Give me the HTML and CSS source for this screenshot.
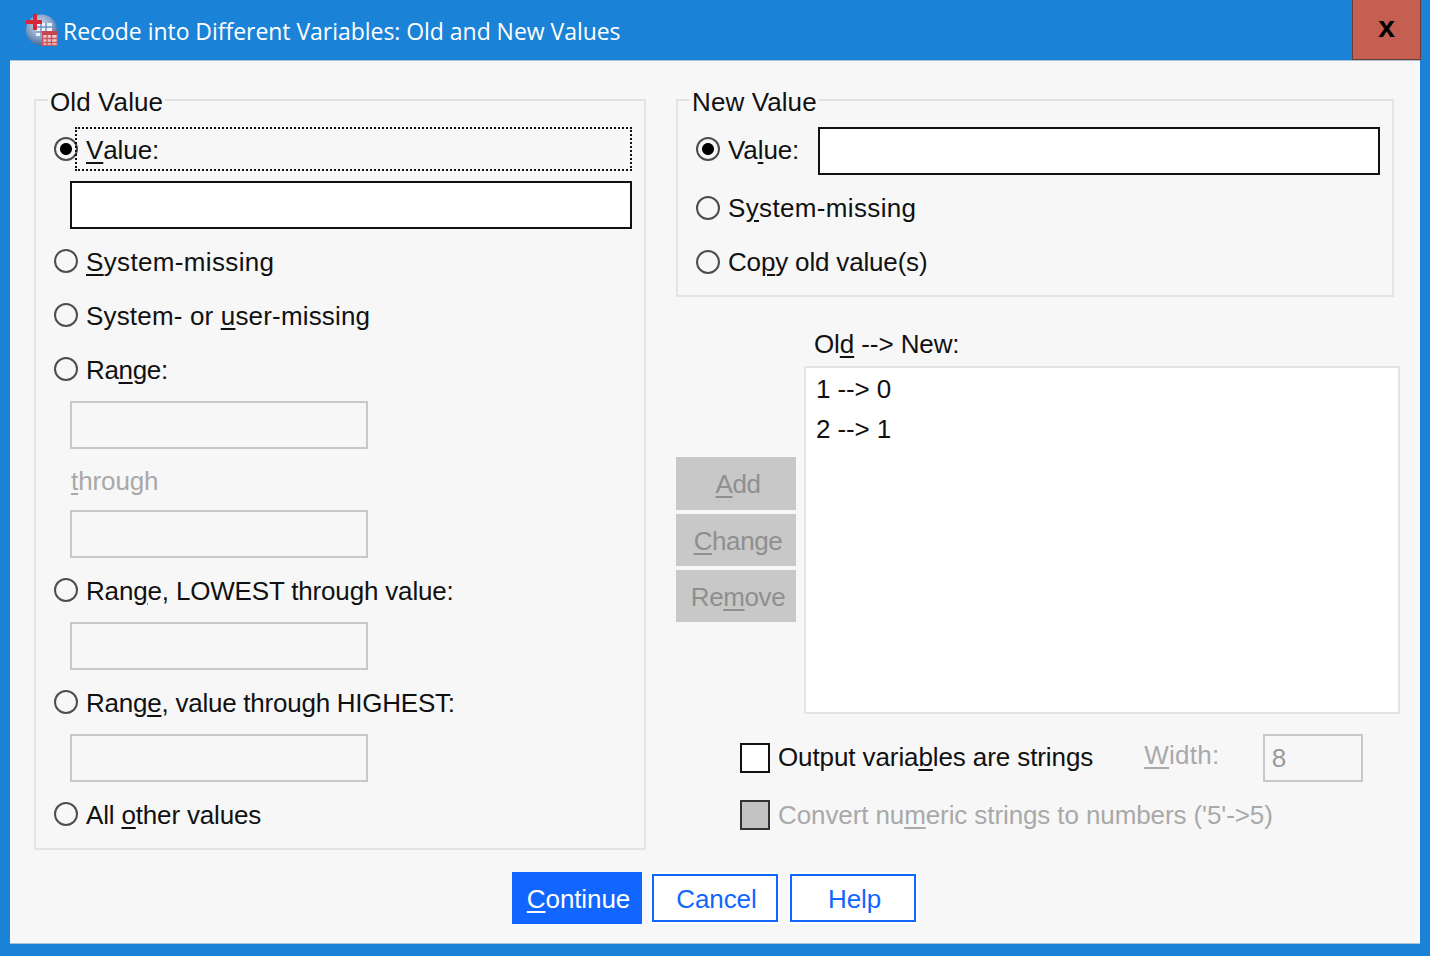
FILE: index.html
```html
<!DOCTYPE html>
<html lang="en">
<head>
    <meta charset="UTF-8">
    <title>Recode into Different Variables: Old and New Values</title>
    <link rel="stylesheet" href="styles.css">
</head>
<body>
    <div class="titlebar">
        <svg class="app-icon" width="32" height="32" viewBox="0 0 32 32">
            <defs>
                <radialGradient id="globe" cx="0.45" cy="0.35" r="0.7">
                    <stop offset="0" stop-color="#d5e0ee"/>
                    <stop offset="0.6" stop-color="#7f9cc4"/>
                    <stop offset="1" stop-color="#3f5f92"/>
                </radialGradient>
            </defs>
            <circle cx="15.5" cy="16" r="15.5" fill="url(#globe)"/>
            <rect x="10" y="9" width="16" height="13" fill="#eef3fa"/>
            <path d="M10 13h16M10 18h16M15 9v13M20 9v13" stroke="#6f92c4" stroke-width="1.5"/>
            <path d="M9 0v16M0 8h16" stroke="#d9253a" stroke-width="4"/>
            <rect x="16" y="17" width="16" height="15" fill="#f3c9cc"/>
            <rect x="16" y="17" width="16" height="4" fill="#c8454f"/>
            <path d="M16.7 21v11M21 21v11M25.500 21v11M31.300 21v11M16 24.500h16M16 28.500h16M16 31.500h16" stroke="#c8555f" stroke-width="1.400"/>
        </svg>
        <span class="title">Recode into Different Variables: Old and New Values</span>
        <div class="close">x</div>
    </div>

    <div class="dialog">
        <div class="main">
            <div class="group group-old">
                <div class="legend">Old Value</div>
                <div class="opt">
                    <input type="radio" name="old" checked>
                    <label class="focus"><u>V</u>alue:</label>
                </div>
                <input class="field indent" type="text">
                <div class="opt"><input type="radio" name="old"><label class="wide"><u>S</u>ystem-missing</label></div>
                <div class="opt"><input type="radio" name="old"><label class="mid">System- or <u>u</u>ser-missing</label></div>
                <div class="opt"><input type="radio" name="old"><label class="tight">Ra<u>n</u>ge:</label></div>
                <input class="field indent short" type="text" disabled>
                <div class="through"><u>t</u>hrough</div>
                <input class="field indent short" type="text" disabled>
                <div class="opt"><input type="radio" name="old"><label class="narrow">Ran<u>g</u>e, LOWEST through value:</label></div>
                <input class="field indent short" type="text" disabled>
                <div class="opt"><input type="radio" name="old"><label class="narrower">Rang<u>e</u>, value through HIGHEST:</label></div>
                <input class="field indent short" type="text" disabled>
                <div class="opt"><input type="radio" name="old"><label class="narrow">All <u>o</u>ther values</label></div>
            </div>

            <div class="right">
                <div class="group group-new">
                    <div class="legend">New Value</div>
                    <div class="opt opt-value">
                        <input type="radio" name="new" checked>
                        <label>Va<u>l</u>ue:</label>
                        <input class="field" type="text">
                    </div>
                    <div class="opt"><input type="radio" name="new"><label class="wide">S<u>y</u>stem-missing</label></div>
                    <div class="opt"><input type="radio" name="new"><label class="narrow">Co<u>p</u>y old value(s)</label></div>
                </div>

                <div class="list-label">Ol<u>d</u> --&gt; New:</div>
                <div class="list-row">
                    <div class="list-buttons">
                        <button class="btn-off" disabled><u>A</u>dd</button>
                        <button class="btn-off" disabled><u>C</u>hange</button>
                        <button class="btn-off" disabled>Re<u>m</u>ove</button>
                    </div>
                    <div class="listbox">
                        <div class="list-item">1 --&gt; 0</div>
                        <div class="list-item">2 --&gt; 1</div>
                    </div>
                </div>

                <div class="check-row">
                    <span class="check"></span>
                    <span class="check-text">Output varia<u>b</u>les are strings</span>
                    <span class="width-label"><u>W</u>idth:</span>
                    <input class="field width-field" type="text" value="8" disabled>
                </div>
                <div class="check-row second">
                    <span class="check check-off"></span>
                    <span class="check-text off">Convert nu<u>m</u>eric strings to numbers ('5'-&gt;5)</span>
                </div>
            </div>
        </div>

        <div class="footer">
            <button class="btn-main"><u>C</u>ontinue</button>
            <button class="btn-line">Cancel</button>
            <button class="btn-line">Help</button>
        </div>
    </div>
</body>
</html>
```

FILE: styles.css
```css
* {
    box-sizing: border-box;
}
html, body {
    margin: 0;
    height: 956px;
    overflow: hidden;
}
body {
    background-color: #1a82d7;
    color: #111;
    font-family: 'Liberation Sans', Arial, sans-serif;
    font-size: 26px;
    letter-spacing: -0.1px;
}
u {
    text-decoration-thickness: 2px;
    text-underline-offset: 3px;
}

/* title bar */
.titlebar {
    height: 60px;
    display: flex;
    align-items: center;
    padding-left: 26px;
    color: white;
}
.app-icon {
    flex: none;
}
.title {
    font-family: 'Open Sans', sans-serif;
    font-size: 23px;
    letter-spacing: -0.04px;
    margin: 2px 0 0 5px;
}
.close {
    width: 69px;
    height: 60px;
    margin-left: auto;
    margin-right: 9px;
    background-color: #c55f52;
    border: 1px solid #6f3a35;
    border-top: none;
    color: black;
    font-size: 30px;
    font-weight: bold;
    line-height: 54px;
    text-align: center;
}

/* dialog body */
.dialog {
    height: 884px;
    margin: 0 10px;
    background-color: #f7f7f7;
    border-top: 1px solid #a9c3da;
    border-bottom: 1px solid #a9c3da;
    padding: 38px 0 0 24px;
}
.main {
    display: flex;
    align-items: flex-start;
    gap: 30px;
}
.right {
    width: 724px;
}

/* group boxes */
.group {
    position: relative;
    border: 2px solid #e4e4e4;
    padding: 26px 12px 0 18px;
    display: flex;
    flex-direction: column;
    gap: 10px;
}
.group-old {
    width: 612px;
    height: 751px;
}
.group-new {
    width: 718px;
    height: 198px;
}
.group-new .opt label {
    padding-top: 0;
}
.group-new .opt-value label {
    padding-top: 2px;
}
.legend {
    position: absolute;
    top: -14px;
    left: 12px;
    padding: 0 2px;
    background-color: #f7f7f7;
    line-height: 30px;
    letter-spacing: 0.1px;
}

/* radio rows */
.opt {
    height: 44px;
    display: flex;
    align-items: center;
    gap: 8px;
    flex: none;
}
.opt label {
    display: flex;
    align-items: center;
    height: 44px;
    padding-top: 2px;
    white-space: pre;
}
.opt label.wide {
    letter-spacing: 0.35px;
}
.opt label.mid {
    letter-spacing: 0.17px;
}
.opt label.narrow {
    letter-spacing: -0.17px;
}
.opt label.narrower {
    letter-spacing: -0.24px;
}
.opt label.tight {
    letter-spacing: -0.35px;
}
.opt input[type="radio"] {
    appearance: none;
    flex: none;
    width: 24px;
    height: 24px;
    margin: 0;
    border: 2px solid #4d4d4d;
    border-radius: 50%;
    background-color: #f7f7f7;
}
.opt input[type="radio"]:checked {
    background: radial-gradient(circle, #000 0 5.5px, #f7f7f7 6.5px);
}
.opt label.focus {
    flex: 1;
    margin-left: -11px;
    padding-left: 9px;
    border: 2px dotted #111;
}
.opt-value {
    height: 49px;
    align-items: flex-start;
}
.opt-value input[type="radio"] {
    margin-top: 10px;
}
.opt-value .field {
    margin-left: auto;
    width: 562px;
}

/* text fields */
.field {
    display: block;
    flex: none;
    height: 48px;
    margin: 0;
    background-color: white;
    border: 2px solid #111;
    border-radius: 0;
    outline: none;
    font: inherit;
}
.field:disabled {
    background-color: #f7f7f7;
    border-color: #c8c8c8;
}
.indent {
    margin-left: 16px;
    width: 562px;
}
.indent.short {
    width: 298px;
}
.through {
    height: 41px;
    margin-left: 17px;
    color: #a9a9a9;
    line-height: 44px;
}

/* list of recodes */
.list-label {
    height: 69px;
    padding: 30px 0 0 138px;
    line-height: 34px;
}
.list-row {
    display: flex;
    gap: 8px;
}
.list-buttons {
    width: 120px;
    padding-top: 91px;
    display: flex;
    flex-direction: column;
    gap: 4px;
}
.btn-off {
    height: 52px;
    padding: 2px 0 0 4px;
    background-color: #c8c8c8;
    border: none;
    color: #8f8f8f;
    font: inherit;
    letter-spacing: -0.4px;
}
.btn-off:first-child {
    height: 53px;
}
.listbox {
    width: 596px;
    height: 348px;
    background-color: white;
    border: 2px solid #e4e4e4;
    padding: 1px 10px;
}
.list-item {
    height: 40px;
    line-height: 40px;
}

/* checkboxes */
.check-row {
    display: flex;
    align-items: center;
    height: 48px;
    margin-top: 20px;
    padding-left: 64px;
}
.check-row.second {
    height: 30px;
    margin-top: 18px;
}
.check {
    flex: none;
    width: 30px;
    height: 30px;
    margin-right: 8px;
    background-color: white;
    border: 2px solid #111;
}
.check-off {
    background-color: #c3c3c3;
    border-color: #333;
}
.check-text {
    margin-top: -2px;
    white-space: pre;
}
.check-text.off {
    margin-top: 0;
    color: #a9a9a9;
}
.width-label {
    margin: -6px 0 0 51px;
    color: #a9a9a9;
    letter-spacing: 0.3px;
}
.width-field {
    width: 100px;
    margin-left: 43px;
    padding-left: 7px;
    color: #9a9a9a;
    letter-spacing: inherit;
}

/* bottom buttons */
.footer {
    display: flex;
    align-items: center;
    margin: 22px 0 0 478px;
}
.footer button {
    font: inherit;
    letter-spacing: inherit;
    padding: 2px 0 0 3px;
    border-radius: 0;
}
.btn-main {
    width: 130px;
    height: 52px;
    margin-right: 10px;
    background-color: #1166ff;
    border: none;
    color: white;
}
.btn-line {
    width: 126px;
    height: 48px;
    margin-right: 12px;
    background-color: white;
    border: 2px solid #1166ff;
    box-shadow: 0 0 0 2px white;
    color: #1166ff;
}
```
